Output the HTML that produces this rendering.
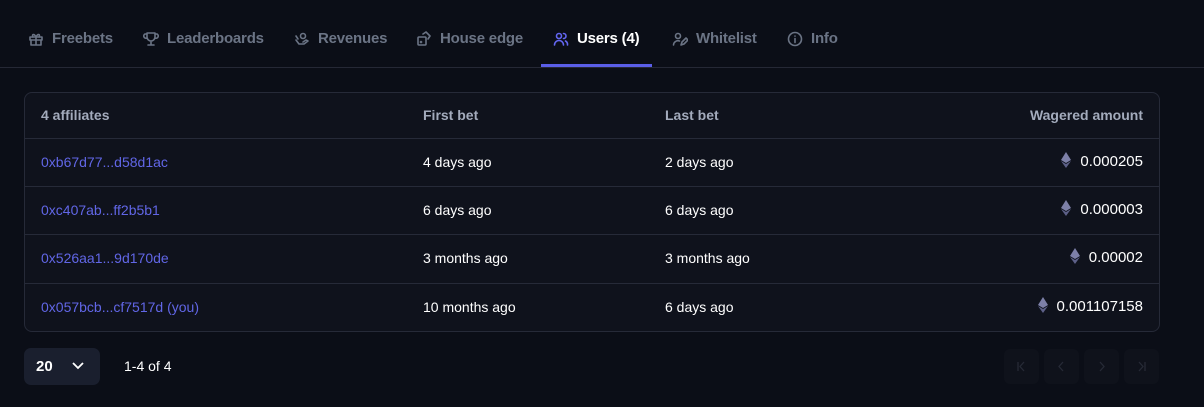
<!DOCTYPE html><html><head><style>
*{box-sizing:border-box;margin:0;padding:0}
body{width:1204px;height:407px;background:#0b0e17;font-family:"Liberation Sans",sans-serif;color:#fff;position:relative;overflow:hidden}
.tabs{position:absolute;top:0;left:0;right:0;height:68px;border-bottom:1px solid #252835}
.tab{position:absolute;top:30px;font-size:15px;font-weight:bold;color:#6b7485;display:flex;align-items:center;gap:8px;white-space:nowrap;letter-spacing:-0.2px}
.tab svg{width:16px;height:16px;fill:none;stroke:#6b7485;stroke-width:1.6;stroke-linecap:round;stroke-linejoin:round}
.tab.act{color:#fff}.tab.act svg{stroke:#6366f1}
.ul{position:absolute;left:541px;top:64px;width:111px;height:3px;background:#5a5ee8}
.tbl{position:absolute;left:24px;top:92px;width:1136px;height:240px;border:1px solid #262a38;border-radius:8px;background:#0f121c;overflow:hidden}
.row{position:absolute;left:0;right:0;height:48px;border-top:1px solid #262a38;font-size:14px}
.row span{position:absolute;top:15px}
.hd{top:0;border-top:none;height:45px;color:#a3abbc;font-weight:bold}
.hd span{top:14px}
.l{color:#6166e6}
.c1{left:16px}.c2{left:398px}.c3{left:640px}.c4{right:16px;font-size:15px}
.hd .c4{font-size:14px}
.eth{display:inline-block;vertical-align:-2px;margin-right:9px}
.sel{position:absolute;left:24px;top:348px;width:76px;height:37px;background:#1a1f2e;border-radius:7px;font-size:15px;font-weight:bold}
.pg{position:absolute;top:349px;width:35px;height:35px;border-radius:6px;background:#0f121b}
.pg svg{position:absolute;left:12px;top:12px}
</style></head><body>
<div class="tabs">
<div class="tab" style="left:28px"><svg viewBox="0 0 16 16"><rect x="2" y="6" width="12" height="3"/><path d="M3 9v5h10V9M8 6v8M8 6C6 2 3.5 3.5 5 6M8 6c2-4 4.5-2.5 3 0"/></svg>Freebets</div>
<div class="tab" style="left:143px"><svg viewBox="0 0 16 16"><path d="M4 2h8v4a4 4 0 0 1-8 0zM4 3H2a2 2 0 0 0 2 4M12 3h2a2 2 0 0 1-2 4M8 10v3M5 14h6"/></svg>Leaderboards</div>
<div class="tab" style="left:294px"><svg viewBox="0 0 16 16"><circle cx="9" cy="5" r="2.5"/><path d="M2 9l3 4h5l4-3-2-1-3 2M2 5l2 3"/></svg>Revenues</div>
<div class="tab" style="left:416px"><svg viewBox="0 0 16 16"><rect x="2" y="6" width="8" height="8" rx="1"/><path d="M7 3l3-2 4 4-2 3"/><circle cx="5" cy="11" r=".5"/></svg>House edge</div>
<div class="tab act" style="left:553px"><svg viewBox="0 0 16 16"><circle cx="6" cy="5" r="2.5"/><path d="M1.5 14a4.5 4.5 0 0 1 9 0M10.5 2.5a2.5 2.5 0 0 1 0 5M12.5 10a4 4 0 0 1 2 4"/></svg>Users (4)</div>
<div class="tab" style="left:672px"><svg viewBox="0 0 16 16"><circle cx="6" cy="5" r="2.5"/><path d="M1.5 14a4.5 4.5 0 0 1 6-4M9 14l1-3 4-4 2 2-4 4z"/></svg>Whitelist</div>
<div class="tab" style="left:787px"><svg viewBox="0 0 16 16"><circle cx="8" cy="8" r="6.5"/><path d="M8 7.5v4M8 5v.1"/></svg>Info</div>
<div class="ul"></div>
</div>
<div class="tbl">
<div class="row hd"><span class="c1">4 affiliates</span><span class="c2">First bet</span><span class="c3">Last bet</span><span class="c4">Wagered amount</span></div>
<div class="row" style="top:45px"><span class="c1 l">0xb67d77...d58d1ac</span><span class="c2">4 days ago</span><span class="c3">2 days ago</span><span class="c4" style="top:13px"><svg class="eth" width="10" height="16" viewBox="0 0 10 16"><path d="M5 0L0 8l5 3 5-3z" fill="#7d80a8"/><path d="M5 12L0 9l5 7 5-7z" fill="#5d6088"/></svg>0.000205</span></div>
<div class="row" style="top:93px"><span class="c1 l">0xc407ab...ff2b5b1</span><span class="c2">6 days ago</span><span class="c3">6 days ago</span><span class="c4" style="top:13px"><svg class="eth" width="10" height="16" viewBox="0 0 10 16"><path d="M5 0L0 8l5 3 5-3z" fill="#7d80a8"/><path d="M5 12L0 9l5 7 5-7z" fill="#5d6088"/></svg>0.000003</span></div>
<div class="row" style="top:141px"><span class="c1 l">0x526aa1...9d170de</span><span class="c2">3 months ago</span><span class="c3">3 months ago</span><span class="c4" style="top:13px"><svg class="eth" width="10" height="16" viewBox="0 0 10 16"><path d="M5 0L0 8l5 3 5-3z" fill="#7d80a8"/><path d="M5 12L0 9l5 7 5-7z" fill="#5d6088"/></svg>0.00002</span></div>
<div class="row" style="top:190px"><span class="c1 l">0x057bcb...cf7517d (you)</span><span class="c2">10 months ago</span><span class="c3">6 days ago</span><span class="c4" style="top:13px"><svg class="eth" width="10" height="16" viewBox="0 0 10 16"><path d="M5 0L0 8l5 3 5-3z" fill="#7d80a8"/><path d="M5 12L0 9l5 7 5-7z" fill="#5d6088"/></svg>0.001107158</span></div>
</div>
<div class="sel"><span style="position:absolute;left:12px;top:10px">20</span><svg style="position:absolute;left:48px;top:14px" width="12" height="8" viewBox="0 0 12 8"><path d="M1 1l5 5 5-5" fill="none" stroke="#fff" stroke-width="1.8"/></svg></div>
<div style="position:absolute;left:124px;top:358px;font-size:14px">1-4 of 4</div>
<div class="pg" style="left:1004px"><svg width="11" height="11" viewBox="0 0 11 11" fill="none" stroke="#262a36" stroke-width="1.3"><path d="M2 1v9M8 1L4 5.5 8 10"/></svg></div>
<div class="pg" style="left:1044px"><svg width="11" height="11" viewBox="0 0 11 11" fill="none" stroke="#262a36" stroke-width="1.3"><path d="M7 1L3 5.5 7 10"/></svg></div>
<div class="pg" style="left:1084px"><svg width="11" height="11" viewBox="0 0 11 11" fill="none" stroke="#262a36" stroke-width="1.3"><path d="M4 1l4 4.5L4 10"/></svg></div>
<div class="pg" style="left:1124px"><svg width="11" height="11" viewBox="0 0 11 11" fill="none" stroke="#262a36" stroke-width="1.3"><path d="M3 1l4 4.5L3 10M9 1v9"/></svg></div>
</body></html>
